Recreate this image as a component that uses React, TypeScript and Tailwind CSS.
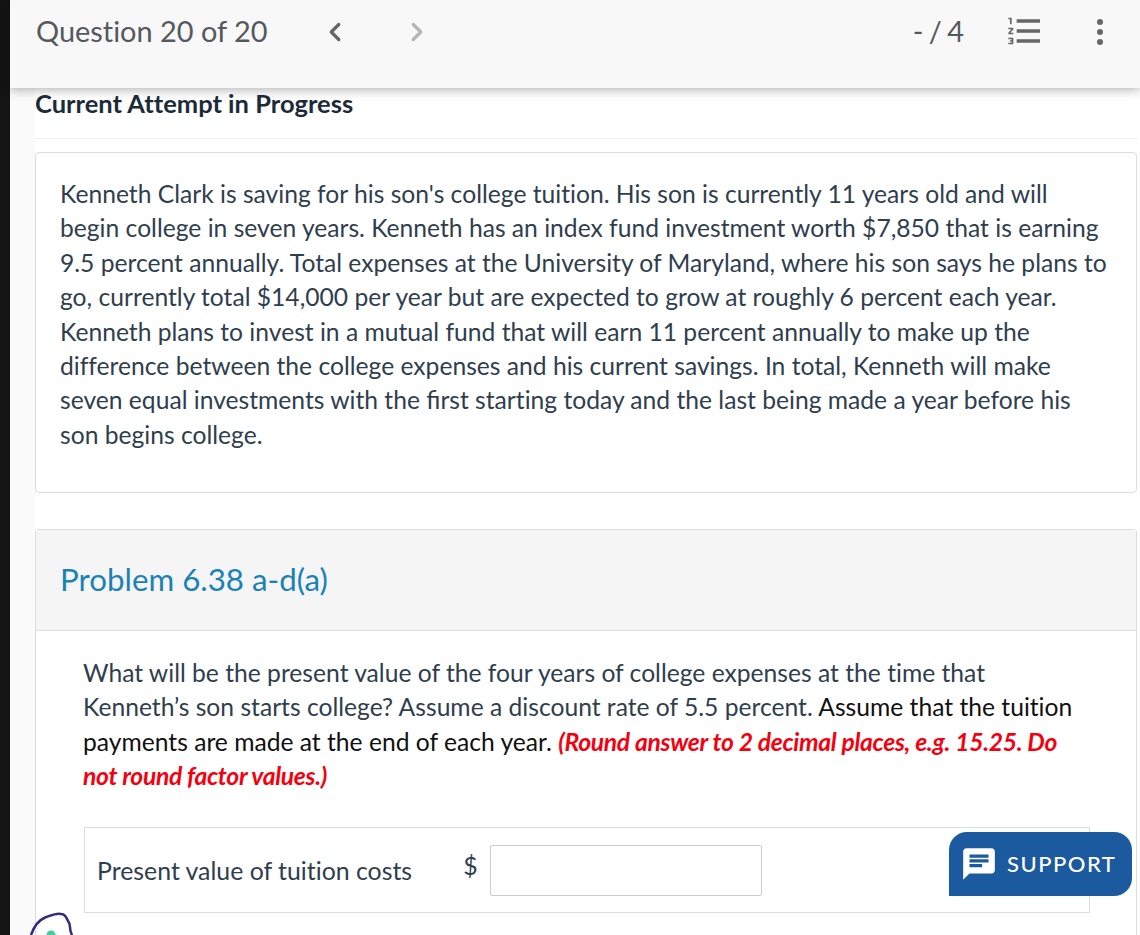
import { ChevronLeft, ChevronRight } from "lucide-react";
import { MdChat, MdFormatListNumbered } from "react-icons/md";

const lato = { fontFamily: "Lato, sans-serif" };

export default function App() {
  return (
    <div style={lato} className="h-[935px] w-[1140px] overflow-hidden bg-white flex relative [font-variant-ligatures:none]">
      <div className="w-[10px] bg-[#141414] shrink-0" />

      <div className="flex-1 min-w-0 flex flex-col">
        {/* Top bar */}
        <header className="relative z-10 h-[88px] shrink-0 bg-[#f8f8f8] shadow-[0_2px_10px_rgba(0,0,0,0.3)] flex items-start pl-[26px] pr-[37px] pt-[10px]">
          <span className="text-[28.9px] leading-[42px] text-[#55595e]">Question 20 of 20</span>
          <ChevronLeft size={30} strokeWidth={2.6} className="ml-[53px] mt-[7px] text-[#666]" />
          <ChevronRight size={30} strokeWidth={2.6} className="ml-[52px] mt-[7px] text-[#b5b5b5]" />
          <span className="ml-auto text-[28.9px] leading-[42px] tracking-[-1px] text-[#55595e]">- / 4</span>
          <MdFormatListNumbered size={40} className="ml-[42px] mt-[1px] text-[#666]" />
          <div className="ml-[52px] mt-[9px] flex flex-col gap-[4px]">
            <span className="w-[6px] h-[6px] rounded-full bg-[#666]" />
            <span className="w-[6px] h-[6px] rounded-full bg-[#666]" />
            <span className="w-[6px] h-[6px] rounded-full bg-[#666]" />
          </div>
        </header>

        <main className="flex-1 min-h-0 pl-[25px] pr-[3px] bg-[linear-gradient(90deg,#fafafa_25px,#ffffff_25px)]">
          <div className="h-[51px] border-b border-[#eee] bg-white text-[25.5px] leading-[30px] font-bold text-[#1c2b3a]">
            Current Attempt in Progress
          </div>

          {/* Scenario */}
          <section className="mt-[13px] h-[341px] rounded border border-[#ddd] bg-white px-[24px] pt-[24px] text-[24.65px] leading-[34.4px] text-[#2f3e4e]">
            <p>
              Kenneth Clark is saving for his son's college tuition. His son is currently 11 years old and will begin college in seven years. Kenneth has an index fund investment worth $7,850 that is earning 9.5 percent annually. Total expenses at the University of Maryland, where his son says he plans to go, currently total $14,000 per year but are expected to grow at roughly 6 percent each year. Kenneth plans to invest in a mutual fund that will earn 11 percent annually to make up the difference between the college expenses and his current savings. In total, Kenneth will make seven equal investments with the <span className="[font-variant-ligatures:common-ligatures]">first</span> starting today and the last being made a year before his son begins college.
            </p>
          </section>

          {/* Problem */}
          <section className="mt-[36px] rounded-t border border-b-0 border-[#ddd] bg-white h-[500px]">
            <div className="h-[101px] border-b border-[#ddd] bg-[#f5f5f5] px-[24px] pt-[28px] text-[31.3px] leading-[42px] text-[#1a82b5]">
              Problem 6.38 a-d(a)
            </div>
            <div className="pl-[47px] pr-[46px] pt-[25px]">
              <p className="text-[24.65px] leading-[34.4px] text-[#2f3e4e]">
                What will be the present value of the four years of college expenses at the time that Kenneth’s son starts college? Assume a discount rate of 5.5 percent. <span className="text-[#111]">Assume that the tuition payments are made at the end of each year.</span>{" "}
                <span className="font-bold italic tracking-[-0.3px] text-[#f5000f]">
                  (Round answer to 2 decimal places, e.g. 15.25. Do not round factor values.)
                </span>
              </p>

              <div className="mt-[33px] ml-[1px] h-[86px] w-[1006px] border border-[#ddd] flex items-center pl-[12px]">
                <span className="mt-[2px] text-[24.85px] text-[#2f3e4e]">Present value of tuition costs</span>
                <span className="ml-[51px] -mt-[7px] text-[24.85px] text-[#2f3e4e]">$</span>
                <div className="ml-[12px] mt-[1px] h-[51px] w-[272px] border border-[#ccc] rounded-[2px] bg-white" />
              </div>
            </div>
          </section>
        </main>
      </div>

      {/* Support tab */}
      <div className="absolute left-[949px] top-[832px] h-[64px] w-[183px] rounded-[18px] rounded-bl-none bg-[#1b5a9e] text-white flex items-center pl-[11px]">
        <MdChat size={38} />
        <span className="ml-[9px] -mt-[2px] text-[22px] font-medium tracking-[1.5px]">SUPPORT</span>
      </div>

      {/* Cut-off mascot at the bottom edge */}
      <svg className="absolute left-[28px] top-[910px]" width="48" height="25" viewBox="0 0 48 25" fill="none">
        <path
          d="M3 25 C6 16 11 10 18 7 C24 5 29 3 33 4 C37 4 38 7 39 9 C41 12 42 14 42 17 C42 20 43 23 44 25"
          stroke="#352b7e"
          strokeWidth="2.5"
        />
        <circle cx="23" cy="25" r="4.5" fill="#3fcf9c" />
      </svg>
    </div>
  );
}
